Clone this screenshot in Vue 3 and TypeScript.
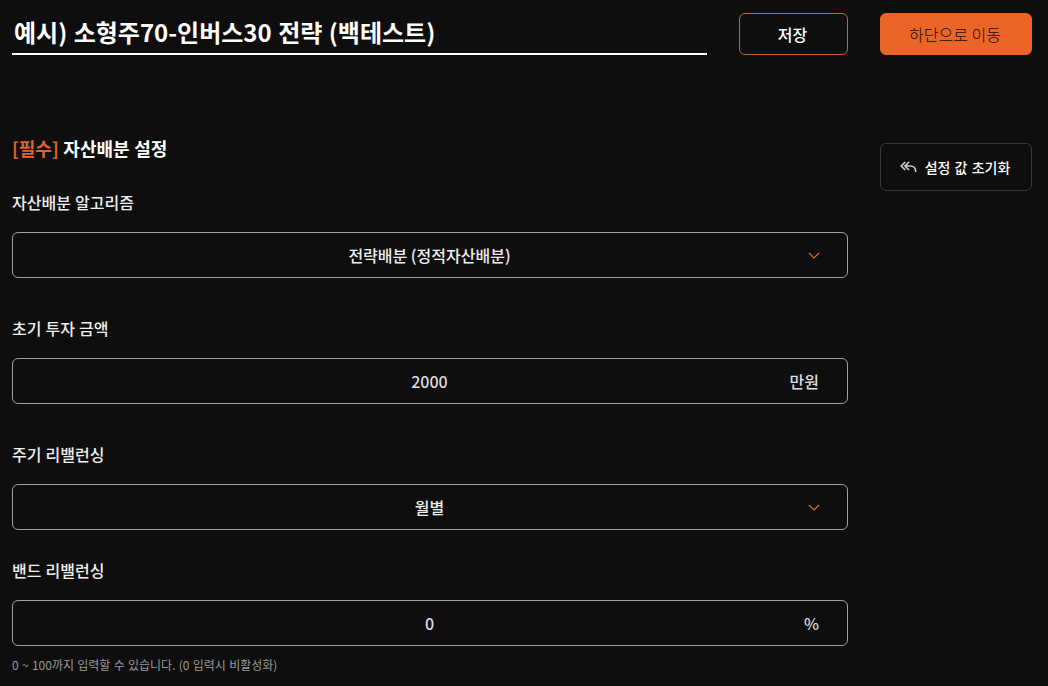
<script setup lang="ts">
import { reactive, ref } from 'vue';

interface Field {
  key: string;
  label: string;
  value: string;
  kind: 'select' | 'input';
  unit?: string;
  hint?: string;
}

const strategyName = ref<string>('예시) 소형주70-인버스30 전략 (백테스트)');

const fields = reactive<Field[]>([
  { key: 'algorithm', label: '자산배분 알고리즘', value: '전략배분 (정적자산배분)', kind: 'select' },
  { key: 'amount', label: '초기 투자 금액', value: '2000', kind: 'input', unit: '만원' },
  { key: 'period', label: '주기 리밸런싱', value: '월별', kind: 'select' },
  {
    key: 'band',
    label: '밴드 리밸런싱',
    value: '0',
    kind: 'input',
    unit: '%',
    hint: '0 ~ 100까지 입력할 수 있습니다. (0 입력시 비활성화)',
  },
]);
</script>

<template>
  <div class="page">
    <header class="header">
      <input v-model="strategyName" class="title" type="text" />
      <button class="btn save">저장</button>
      <button class="btn move">하단으로 이동</button>
    </header>

    <main class="content">
      <section class="settings">
        <h2><span class="required">[필수]</span> 자산배분 설정</h2>
        <div v-for="field in fields" :key="field.key" class="field" :class="field.key">
          <label :for="field.key">{{ field.label }}</label>
          <button v-if="field.kind === 'select'" :id="field.key" class="box">
            <span>{{ field.value }}</span>
            <svg class="chevron" width="12" height="7" viewBox="0 0 12 7">
              <path d="M1 1L6 6L11 1" />
            </svg>
          </button>
          <div v-else class="box">
            <input :id="field.key" v-model="field.value" type="text" />
            <span class="unit">{{ field.unit }}</span>
          </div>
          <p v-if="field.hint" class="hint">{{ field.hint }}</p>
        </div>
      </section>

      <aside>
        <button class="btn reset">
          <svg width="17" height="12" viewBox="0 0 17 12">
            <path d="M5.2 1L1.2 5L5.2 9M9 1L5 5L9 9M5 5H10.5C13.5 5 15.8 7.2 15.8 11" />
          </svg>
          설정 값 초기화
        </button>
      </aside>
    </main>
  </div>
</template>

<style>
body {
  background: #0e0e0e;
}
</style>

<style scoped>
.page {
  box-sizing: border-box;
  height: 686px;
  padding: 13px 16px 0 12px;
  overflow: hidden;
  background: #0e0e0e;
  color: #fff;
  font-family: 'Noto Sans CJK KR', sans-serif;
}

.page * {
  box-sizing: border-box;
}

button,
input {
  font-family: inherit;
  color: inherit;
}

.header {
  display: flex;
  gap: 32px;
  height: 42px;
}

.title {
  flex: 1;
  min-width: 0;
  padding: 0 0 3px 2px;
  border: 0;
  border-bottom: 2px solid #fff;
  background: transparent;
  font-size: 24px;
  font-weight: 700;
  word-spacing: 1px;
  outline: none;
}

.btn {
  display: flex;
  align-items: center;
  justify-content: center;
  padding: 0 2px 1px 0;
  border: 1px solid #ec6426;
  border-radius: 6px;
  background: transparent;
}

.save {
  width: 109px;
  border-color: #c8622f;
  font-size: 16px;
  font-weight: 500;
}

.move {
  width: 152px;
  background: #ec6426;
  color: #0e0e0e;
  font-size: 16px;
  font-weight: 300;
}

.content {
  display: flex;
  gap: 32px;
  padding-top: 79px;
}

.settings {
  width: 836px;
}

h2 {
  margin: 0 0 28px;
  font-size: 18px;
  font-weight: 700;
  line-height: 28px;
  word-spacing: 0.5px;
}

.required {
  color: #e0622a;
}

.field {
  margin-bottom: 38px;
}

.period {
  margin-bottom: 28px;
}

label {
  display: block;
  height: 42px;
  color: #eee;
  font-size: 16px;
  font-weight: 500;
  line-height: 24px;
  word-spacing: 0.5px;
}

.box {
  position: relative;
  display: flex;
  align-items: center;
  justify-content: center;
  width: 100%;
  height: 46px;
  padding: 0 1px 0 0;
  border: 1px solid #a0a0a0;
  border-radius: 6px;
  background: transparent;
  color: #eee;
  font-size: 16px;
  font-weight: 500;
}

.box input {
  width: 100%;
  padding: 0;
  border: 0;
  background: transparent;
  color: #ddd;
  font-size: 16px;
  font-weight: 500;
  text-align: center;
}

.chevron {
  position: absolute;
  right: 27px;
  fill: none;
  stroke: #ec6426;
  stroke-width: 1.2;
}

.unit {
  position: absolute;
  right: 28px;
  color: #ddd;
}

.hint {
  margin: 9px 0 0;
  color: #999;
  font-size: 12px;
  line-height: 20px;
  word-spacing: 0.6px;
}

aside {
  padding-top: 9px;
}

.reset {
  gap: 8px;
  width: 152px;
  height: 48px;
  border-color: #393939;
  font-size: 14px;
  font-weight: 500;
  word-spacing: 1px;
}

.reset svg {
  fill: none;
  stroke: #ccc;
  stroke-width: 1.7;
}
</style>
